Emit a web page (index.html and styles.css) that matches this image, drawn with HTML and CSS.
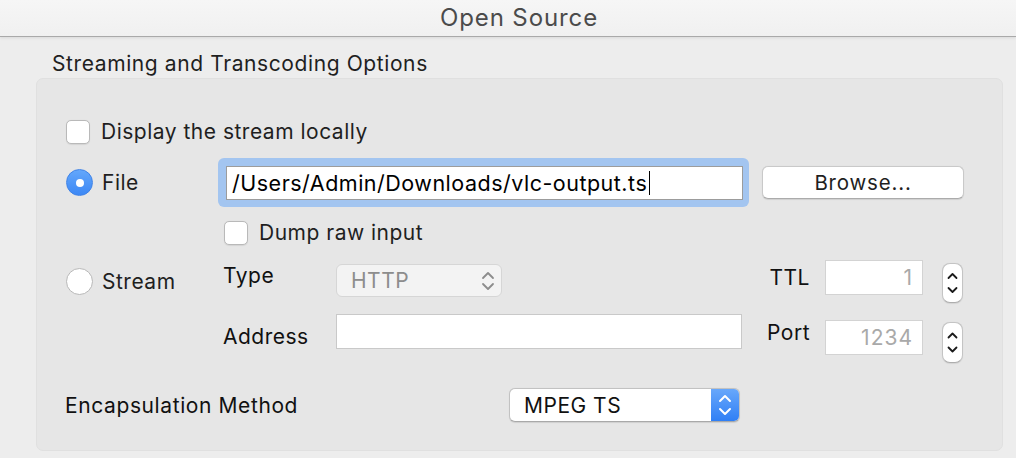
FILE: index.html
```html
<!DOCTYPE html>
<html>
<head>
<meta charset="utf-8">
<link rel="stylesheet" href="styles.css">
</head>
<body>
<div class="window">
  <div class="titlebar">Open Source</div>
  <div class="section-label">Streaming and Transcoding Options</div>
  <div class="group">
    <div class="row r1">
      <span class="checkbox"></span><span class="lbl">Display the stream locally</span>
    </div>
    <div class="row r2">
      <div class="radio-wrap"><span class="radio on"></span><span class="lbl">File</span></div>
      <div class="focus-ring"><div class="textfield">/Users/Admin/Downloads/vlc-output.ts<span class="caret"></span></div></div>
      <div class="button">Browse...</div>
    </div>
    <div class="row r3">
      <span class="checkbox"></span><span class="lbl">Dump raw input</span>
    </div>
    <div class="stream-grid">
      <div class="radio-wrap stream-radio"><span class="radio"></span><span class="lbl">Stream</span></div>
      <div class="glabel type-lbl">Type</div>
      <div class="popup disabled">
        <span class="popup-text">HTTP</span>
        <svg class="chev" width="14" height="22" viewBox="0 0 14 22"><path d="M2 8 L7 3 L12 8 M2 14 L7 19 L12 14" fill="none" stroke="#8c8c8c" stroke-width="1.8" stroke-linecap="round" stroke-linejoin="round"/></svg>
      </div>
      <div class="glabel ttl-lbl">TTL</div>
      <div class="numfield ttl-field">1</div>
      <div class="stepper ttl-step">
        <svg width="21" height="40" viewBox="0 0 21 40"><path d="M6.5 15 L10.5 11 L14.5 15 M6.5 25 L10.5 29 L14.5 25" fill="none" stroke="#1a1a1a" stroke-width="1.8" stroke-linecap="round" stroke-linejoin="round"/></svg>
      </div>
      <div class="glabel addr-lbl">Address</div>
      <div class="addrfield"></div>
      <div class="glabel port-lbl">Port</div>
      <div class="numfield port-field">1234</div>
      <div class="stepper port-step">
        <svg width="21" height="41" viewBox="0 0 21 41"><path d="M6.5 15.5 L10.5 11.5 L14.5 15.5 M6.5 25.5 L10.5 29.5 L14.5 25.5" fill="none" stroke="#1a1a1a" stroke-width="1.8" stroke-linecap="round" stroke-linejoin="round"/></svg>
      </div>
    </div>
    <div class="row r6">
      <div class="enc-lbl">Encapsulation Method</div>
      <div class="popup active">
        <span class="popup-text">MPEG TS</span>
        <span class="popup-arrows">
          <svg width="28" height="32" viewBox="0 0 28 32"><path d="M9 12 L14 7 L19 12 M9 20 L14 25 L19 20" fill="none" stroke="#ffffff" stroke-width="2" stroke-linecap="round" stroke-linejoin="round"/></svg>
        </span>
      </div>
    </div>
  </div>
</div>
</body>
</html>
```

FILE: styles.css
```css
* { box-sizing: border-box; }
html, body {
  margin: 0;
  padding: 0;
}
body {
  width: 1016px;
  height: 458px;
  overflow: hidden;
  background: #ededed;
  font-family: "Inter", "Roboto", sans-serif;
  font-size: 21px;
  letter-spacing: 0.5px;
  color: #1f1f1f;
}
.window {
  width: 1016px;
  height: 458px;
  background: #ededed;
}
.titlebar {
  height: 37px;
  background: linear-gradient(#f6f6f6, #f0f0f0);
  border-bottom: 1px solid #a9a9a9;
  box-shadow: 0 1px 3px rgba(0, 0, 0, 0.09);
  text-align: center;
  line-height: 35px;
  font-size: 24px;
  color: #4b4b4b;
  letter-spacing: 0.9px;
  padding-left: 22px;
  position: relative;
}
.section-label {
  margin-top: 15px;
  padding-left: 52px;
  height: 24px;
  line-height: 24px;
  font-size: 21px;
  color: #1f1f1f;
  letter-spacing: 0.6px;
}
.group {
  margin: 2px 13px 0 36px;
  height: 373px;
  background: #e6e6e6;
  border: 1px solid #e0e0e0;
  border-radius: 7px;
  padding: 40px 0 0 29px;
}
.row {
  display: flex;
  align-items: center;
}
.lbl {
  white-space: nowrap;
}
.checkbox {
  width: 24px;
  height: 24px;
  background: #ffffff;
  border: 1px solid #b9b9b9;
  border-radius: 5px;
  box-shadow: 0 0.5px 1px rgba(0, 0, 0, 0.08);
  flex: none;
}
.r1 .lbl { margin-left: 11px; }
.r2 {
  margin-top: 14px;
  height: 49px;
}
.radio-wrap {
  display: flex;
  align-items: center;
  width: 152px;
  flex: none;
}
.radio {
  width: 27px;
  height: 27px;
  border-radius: 50%;
  background: #ffffff;
  border: 1px solid #b8b8b8;
  flex: none;
  display: flex;
  align-items: center;
  justify-content: center;
}
.radio.on {
  background: linear-gradient(#63a7fb, #3d88f5);
  border: 1px solid #3f83e8;
}
.radio.on::after {
  content: "";
  width: 8px;
  height: 8px;
  border-radius: 50%;
  background: #ffffff;
}
.radio-wrap .lbl { margin-left: 9px; }
.focus-ring {
  width: 531px;
  height: 49px;
  flex: none;
  background: #a3c5f0;
  border-radius: 6px;
  padding: 8px 6px 7px 8px;
}
.textfield {
  height: 34px;
  background: #ffffff;
  border: 1px solid #9c9c9c;
  padding-left: 5px;
  font-size: 21.5px;
  line-height: 32px;
  color: #000000;
  white-space: nowrap;
  letter-spacing: 0.5px;
  display: flex;
  align-items: center;
}
.caret {
  width: 1px;
  height: 24px;
  background: #000;
  margin-left: 2px;
}
.button {
  margin-left: 13px;
  width: 202px;
  height: 33px;
  flex: none;
  background: #ffffff;
  border: 1px solid #c9c9c9;
  border-bottom-color: #ababab;
  border-radius: 6px;
  box-shadow: 0 0.5px 1px rgba(0, 0, 0, 0.1);
  text-align: center;
  line-height: 31px;
  font-size: 20.5px;
  letter-spacing: 0.8px;
  color: #1f1f1f;
}
.r3 {
  margin-top: 13px;
  margin-left: 158px;
}
.r3 .lbl { margin-left: 11px; }
.stream-grid {
  margin-top: 15px;
  display: grid;
  grid-template-columns: 157px 113px 406px 83px 98px 40px;
  grid-template-rows: 43px 49px;
  row-gap: 11px;
  align-items: start;
}
.stream-radio {
  grid-column: 1;
  grid-row: 1;
  margin-top: 8px;
}
.glabel {
  line-height: 24px;
  color: #111111;
  white-space: nowrap;
}
.type-lbl { grid-column: 2; grid-row: 1; margin-top: 4px; }
.addr-lbl { grid-column: 2; grid-row: 2; margin-top: 11px; }
.ttl-lbl { grid-column: 4; grid-row: 1; margin-top: 6px; justify-self: end; margin-right: 15px; }
.port-lbl { grid-column: 4; grid-row: 2; margin-top: 7px; justify-self: end; margin-right: 15px; }
.popup {
  display: flex;
  align-items: center;
  border-radius: 6px;
}
.popup.disabled {
  grid-column: 3;
  grid-row: 1;
  margin-top: 4px;
  width: 166px;
  height: 33px;
  background: #f3f3f3;
  border: 1px solid #d6d6d6;
  padding-left: 14px;
  padding-right: 6px;
  justify-content: space-between;
}
.popup.disabled .popup-text {
  color: #8d8d8d;
  font-size: 21px;
}
.addrfield {
  grid-column: 3;
  grid-row: 2;
  width: 406px;
  height: 35px;
  background: #ffffff;
  border: 1px solid #c9c9c9;
}
.numfield {
  width: 98px;
  height: 35px;
  background: #ffffff;
  border: 1px solid #d3d3d3;
  text-align: right;
  padding-right: 9px;
  line-height: 33px;
  font-size: 21px;
  color: #a9a9a9;
  letter-spacing: 1px;
}
.ttl-field { grid-column: 5; grid-row: 1; }
.port-field { grid-column: 5; grid-row: 2; margin-top: 6px; }
.stepper {
  width: 21px;
  background: #ffffff;
  border: 1px solid #c4c4c4;
  border-bottom-color: #adadad;
  border-radius: 8px;
  box-shadow: 0 0.5px 1px rgba(0, 0, 0, 0.08);
  justify-self: end;
  overflow: hidden;
  display: flex;
  align-items: center;
  justify-content: center;
}
.stepper svg { flex: none; }
.ttl-step { grid-column: 6; grid-row: 1; height: 40px; margin-top: 3px; }
.port-step { grid-column: 6; grid-row: 2; height: 41px; margin-top: 8px; }
.r6 {
  margin-top: 25px;
}
.enc-lbl {
  width: 444px;
  margin-left: -1px;
  flex: none;
  color: #111111;
  white-space: nowrap;
  letter-spacing: 0.6px;
}
.popup.active {
  width: 231px;
  height: 34px;
  background: #ffffff;
  border: 1px solid #c2c2c2;
  border-bottom-color: #a9a9a9;
  box-shadow: 0 0.5px 1px rgba(0, 0, 0, 0.1);
  overflow: hidden;
  justify-content: space-between;
  padding-left: 14px;
}
.popup.active .popup-text {
  color: #111111;
  font-size: 21px;
}
.popup-arrows {
  width: 28px;
  height: 34px;
  background: linear-gradient(#6aa9fb, #2e7ef5);
  display: flex;
  align-items: center;
  justify-content: center;
}
```
